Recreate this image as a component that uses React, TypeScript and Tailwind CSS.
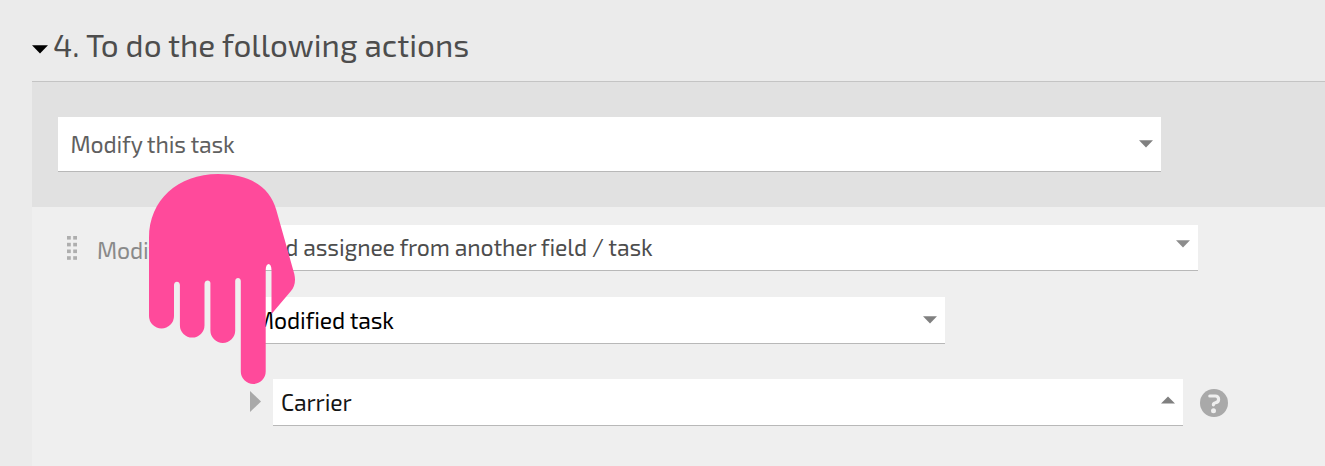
import React from "react";

function Caret({ up = false, className = "h-2 w-3.5" }: { up?: boolean; className?: string }) {
  return (
    <svg viewBox="0 0 14 8" preserveAspectRatio="none" className={`shrink-0 ${className}`} fill="currentColor" aria-hidden="true">
      <path d={up ? "M0 7.5 7 .5l7 7z" : "M0 .3h14l-7 7.2z"} />
    </svg>
  );
}

function DragHandle() {
  return (
    <svg viewBox="0 0 10 24" className="h-6 w-2.5 shrink-0 text-[#aeaeae]" fill="currentColor" aria-hidden="true">
      {[0, 6.8, 13.5, 20.2].map((y) => (
        <React.Fragment key={y}>
          <rect x="0" y={y} width="3.8" height="3.6" />
          <rect x="6.2" y={y} width="3.8" height="3.6" />
        </React.Fragment>
      ))}
    </svg>
  );
}

function HelpIcon() {
  return (
    <svg viewBox="0 0 28 28" className="ml-[17px] h-7 w-7 shrink-0" aria-label="Help">
      <circle cx="14" cy="14" r="14" fill="#a9a9a9" />
      <path
        d="M9.8 7h5.6a3.2 3.2 0 0 1 3.2 3.2c0 2.4-1.2 3.2-3 3.5-1.5.3-2.2.8-2.2 2.1"
        fill="none"
        stroke="#efefef"
        strokeWidth="3.2"
        strokeLinecap="round"
        strokeLinejoin="round"
      />
      <circle cx="13.5" cy="21.8" r="2.5" fill="#efefef" />
    </svg>
  );
}

function PointingHand() {
  return (
    <svg
      viewBox="149 174 147 211"
      className="pointer-events-none absolute left-[149px] top-[174px] h-[211px] w-[147px]"
      fill="#ff4a9b"
      aria-hidden="true"
    >
      <path d="M149 238C149 200 178 174 218 174C250 174 270 187 276.3 210L294.3 274C296 281 294.5 287 291 291L271.5 314V270C271.5 262 265.7 262 265.7 270V371.5A12.4 12.4 0 0 1 240.8 371.5V281C240.8 277 235.2 277 235.2 281V330.5A12.4 12.4 0 0 1 210.4 330.5V283C210.4 279.5 204.5 279.5 204.5 284V325.2A12.3 12.3 0 0 1 179.9 325.2V285C179.9 280.5 174 280.5 174 285V316A12.5 12.5 0 0 1 149 316Z" />
    </svg>
  );
}

export default function App() {
  return (
    <main className="relative flex h-[466px] w-full flex-col overflow-hidden bg-[#ebebeb] pl-8 font-['Exo_2','Roboto',sans-serif] text-[23px] leading-none">
      <h2 className="flex h-[81px] shrink-0 items-center pt-2 text-[31.5px] font-normal text-[#4d4d4d]">
        <Caret className="mr-[5px] mt-[9px] h-[9px] w-4 text-black" />
        <span className="whitespace-nowrap">4. To do the following actions</span>
      </h2>

      <section className="flex h-[126px] shrink-0 items-start border-t border-[#c4c4c4] bg-[#e1e1e1] pl-[26px] pt-[35px]">
        <div className="flex h-[55px] w-[1103px] items-center justify-between border-b border-[#b8b8b8] bg-white pl-[12.5px] pr-2 text-[#606060]">
          <span className="tracking-[-0.13px]">Modify this task</span>
          <Caret className="h-2 w-3.5 text-[#808080]" />
        </div>
      </section>

      <section className="flex grow flex-col bg-[#efefef] pt-[18px]">
        <div className="flex h-[46px] items-center pl-[35px]">
          <DragHandle />
          <span className="ml-5 w-[152px] pt-1 tracking-[-0.13px] text-[#8a8a8a]">Modify</span>
          <div className="flex h-[46px] w-[949px] items-center justify-between border-b border-[#b8b8b8] bg-white pl-[9px] pr-2 text-[#4d4d4d]">
            <span className="whitespace-nowrap tracking-[-0.13px]">Add assignee from another field / task</span>
            <Caret className="-mt-[7px] h-2 w-3.5 text-[#8c8c8c]" />
          </div>
        </div>

        <div className="mt-[26px] flex h-[47px] pl-[217px]">
          <div className="flex w-[696px] items-center justify-between border-b border-[#b8b8b8] bg-white pl-[5px] pr-2 text-black">
            <span className="tracking-[-0.13px]">Modified task</span>
            <Caret className="h-2 w-3.5 text-[#808080]" />
          </div>
        </div>

        <div className="mt-[35px] flex h-[47px] items-center pl-[218px]">
          <svg viewBox="0 0 11 21" className="-mt-0.5 h-[21px] w-[11px] shrink-0 text-[#a9a9a9]" fill="currentColor" aria-hidden="true">
            <path d="M0 0 11 10.5 0 21z" />
          </svg>
          <div className="ml-3 flex h-[47px] w-[910px] items-center justify-between border-b border-[#b8b8b8] bg-white pl-2 pr-2 text-[#151515]">
            <span className="tracking-[-0.13px]">Carrier</span>
            <Caret up className="-mt-1 h-2 w-3.5 text-[#808080]" />
          </div>
          <HelpIcon />
        </div>
      </section>

      <PointingHand />
    </main>
  );
}
